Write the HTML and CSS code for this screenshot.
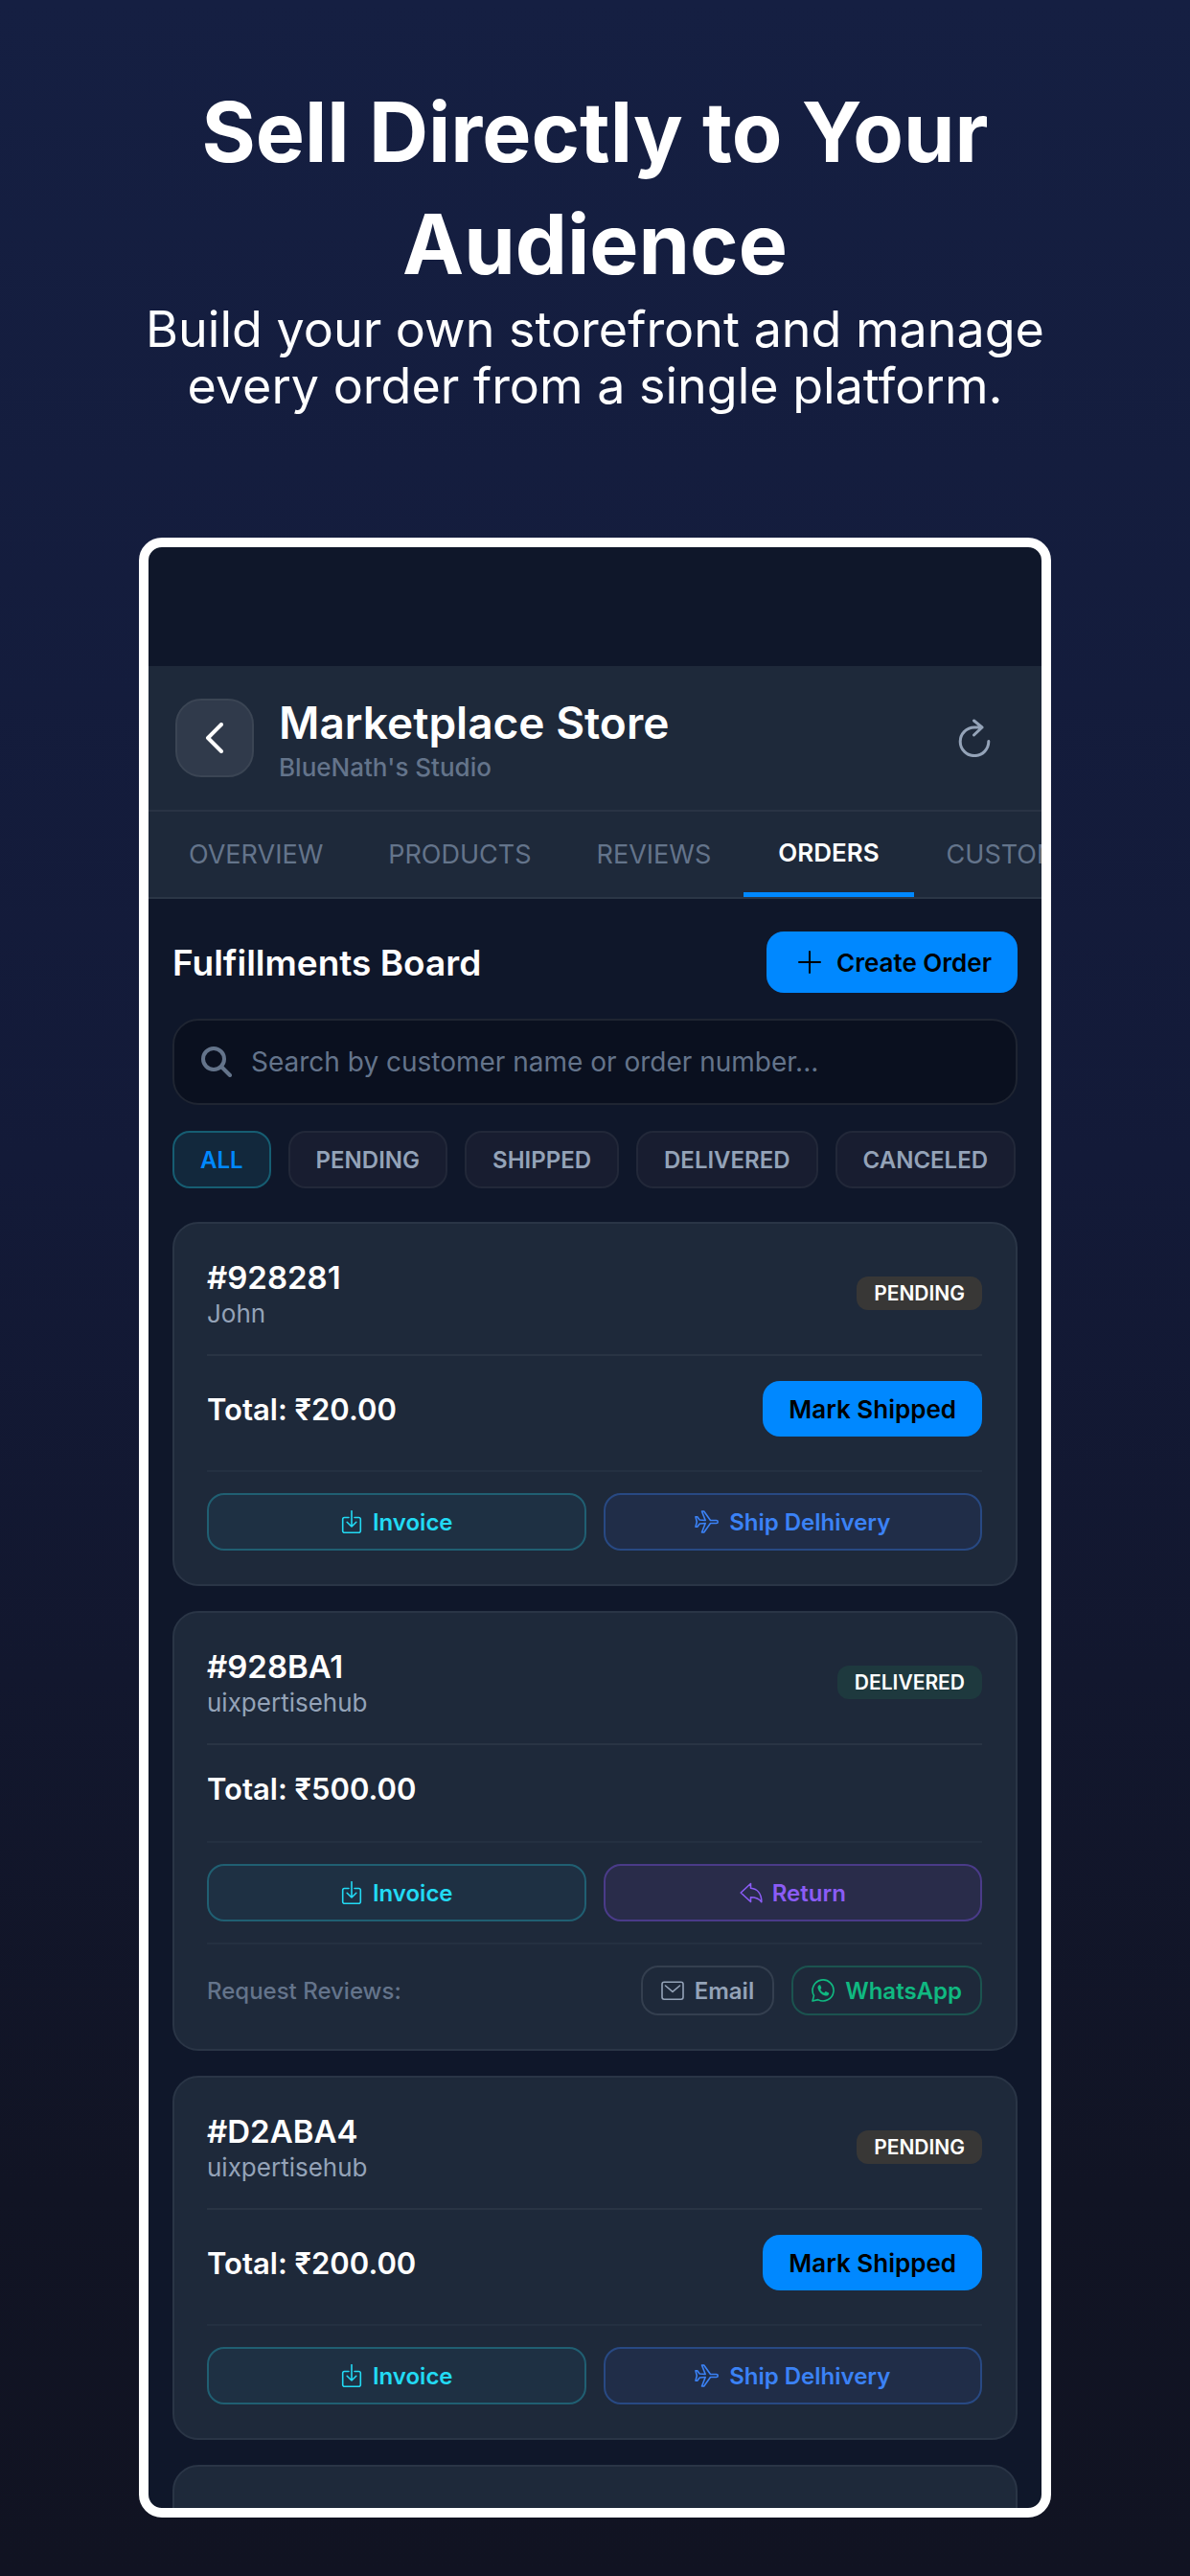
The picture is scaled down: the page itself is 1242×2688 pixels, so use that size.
FILE: index.html
```
<!DOCTYPE html>
<html lang="en">
<head>
  <meta charset="UTF-8" />
  <meta name="viewport" content="width=device-width, initial-scale=1.0"/>
  <title>Marketplace Store</title>
  <link rel="stylesheet" href="styles.css">
</head>
<body>
  <!-- Shared icons -->
  <svg class="sprite" aria-hidden="true">
    <symbol id="icon-invoice" viewBox="0 0 24 24">
      <path d="M9 7.500H4.500A1.800 1.800 0 0 0 2.700 9.300v12.200a1.800 1.800 0 0 0 1.800 1.800h15a1.800 1.800 0 0 0 1.800-1.800V9.300a1.800 1.800 0 0 0-1.800-1.800H15M12 .7v16.300M7.200 12.300L12 17l4.800-4.700"/>
    </symbol>
    <symbol id="icon-plane" viewBox="0 0 26 24">
      <path d="M1 6.800h1.800l2.400 3.200 6 .5L7.500 1h2.200L16.500 10.500h6.200a1.500 1.500 0 0 1 0 3H16.500L9.700 23H7.500l3.700-9.500-6 .5-2.400 3.200H1L2.300 12z"/>
    </symbol>
    <symbol id="icon-return" viewBox="0 0 24 24">
      <path d="M11.500 7.200V2.500L1.200 12l10.300 9.500v-4.700c5 0 8.500 1 11.300 4.900C22.800 13 18.500 7.800 11.500 7.200z"/>
    </symbol>
    <symbol id="icon-mail" viewBox="0 0 24 24">
      <rect x="1" y="3.200" width="22" height="18" rx="2.200"/>
      <path d="M4.500 7l7.500 6.300L19.500 7"/>
    </symbol>
    <symbol id="icon-whatsapp" viewBox="0 0 24 24">
      <path d="M1 23l1.500-5.600A11 11 0 1 1 6.800 21.600z"/>
      <path class="solid" d="M8.300 6.300c-1.500.6-2.200 2-1.700 3.700 1 3.500 3.900 6.500 7.700 7.500 1.700.4 3.300-.3 3.800-1.800.2-.9 0-1.200-.6-1.500l-2.200-1c-.5-.2-.8-.1-1.100.3l-.9 1.100c-1.900-.7-3.200-2-4-3.700l.8-1.100c.3-.4.3-.6.100-1.100L9.300 6.800c-.2-.5-.5-.6-1-.5z"/>
    </symbol>
  </svg>

  <header class="hero">
    <h1>Sell Directly to Your<br>Audience</h1>
    <p>Build your own storefront and manage<br>every order from a single platform.</p>
  </header>

  <main class="phone">
    <div class="status-bar"></div>

    <div class="store-header">
      <button class="back-btn" aria-label="Back">
        <svg width="20" height="32" viewBox="0 0 20 32"><path d="M17 2L3 16l14 14"/></svg>
      </button>
      <div class="store-name">
        <h2>Marketplace Store</h2>
        <p>BlueNath's Studio</p>
      </div>
      <button class="refresh-btn" aria-label="Refresh">
        <svg width="34" height="40" viewBox="0 0 34 40"><path d="M25 9H17A14.800 14.800 0 1 0 31.800 23.500M16.500 2l8.500 7-8.500 8"/></svg>
      </button>
    </div>

    <nav class="tabs">
      <a href="#overview">OVERVIEW</a>
      <a href="#products">PRODUCTS</a>
      <a href="#reviews">REVIEWS</a>
      <a href="#orders" class="active">ORDERS</a>
      <a href="#customers">CUSTOMERS</a>
    </nav>

    <section class="board">
      <div class="board-head">
        <h3>Fulfillments Board</h3>
        <button class="create-btn">
          <svg width="24" height="24" viewBox="0 0 24 24"><path d="M12 1v22M1 12h22"/></svg>
          Create Order
        </button>
      </div>

      <div class="search">
        <svg width="32" height="32" viewBox="0 0 32 32"><circle cx="13" cy="13" r="11"/><path d="M21 21l9 9"/></svg>
        <input type="text" aria-label="Search orders" placeholder="Search by customer name or order number...">
      </div>

      <div class="filters">
        <button class="active">ALL</button>
        <button>PENDING</button>
        <button>SHIPPED</button>
        <button>DELIVERED</button>
        <button>CANCELED</button>
      </div>

      <article class="card">
        <div class="card-head">
          <div>
            <h4>#928281</h4>
            <p>John</p>
          </div>
          <span class="badge pending">PENDING</span>
        </div>
        <div class="card-total">
          <span>Total: ₹20.00</span>
          <button class="ship-btn">Mark Shipped</button>
        </div>
        <div class="card-actions">
          <button class="invoice"><svg><use href="#icon-invoice"/></svg>Invoice</button>
          <button class="delhivery"><svg class="plane"><use href="#icon-plane"/></svg>Ship Delhivery</button>
        </div>
      </article>

      <article class="card">
        <div class="card-head">
          <div>
            <h4>#928BA1</h4>
            <p>uixpertisehub</p>
          </div>
          <span class="badge delivered">DELIVERED</span>
        </div>
        <div class="card-total">
          <span>Total: ₹500.00</span>
        </div>
        <div class="card-actions">
          <button class="invoice"><svg><use href="#icon-invoice"/></svg>Invoice</button>
          <button class="return"><svg><use href="#icon-return"/></svg>Return</button>
        </div>
        <div class="card-reviews">
          <span>Request Reviews:</span>
          <button class="email"><svg><use href="#icon-mail"/></svg>Email</button>
          <button class="whatsapp"><svg><use href="#icon-whatsapp"/></svg>WhatsApp</button>
        </div>
      </article>

      <article class="card">
        <div class="card-head">
          <div>
            <h4>#D2ABA4</h4>
            <p>uixpertisehub</p>
          </div>
          <span class="badge pending">PENDING</span>
        </div>
        <div class="card-total">
          <span>Total: ₹200.00</span>
          <button class="ship-btn">Mark Shipped</button>
        </div>
        <div class="card-actions">
          <button class="invoice"><svg><use href="#icon-invoice"/></svg>Invoice</button>
          <button class="delhivery"><svg class="plane"><use href="#icon-plane"/></svg>Ship Delhivery</button>
        </div>
      </article>

      <article class="card">
        <div class="card-head">
          <div>
            <h4>#C8C89A</h4>
          </div>
        </div>
      </article>
    </section>
  </main>
</body>
</html>
```

FILE: styles.css
```
* {
  box-sizing: border-box;
  margin: 0;
}

body {
  display: flex;
  flex-direction: column;
  height: 100vh;
  padding: 80px 145px 61px;
  font-family: Inter, "Liberation Sans", sans-serif;
  color: #ffffff;
  background: linear-gradient(180deg, #151f42 0%, #131a38 45%, #111424 85%, #111322 100%);
}

button {
  display: flex;
  align-items: center;
  justify-content: center;
  border: 2px solid transparent;
  border-radius: 18px;
  background: none;
  color: inherit;
  font-family: inherit;
  font-weight: 600;
  white-space: nowrap;
  cursor: pointer;
}

svg {
  flex: none;
  fill: none;
  stroke: currentColor;
  stroke-width: 2;
  stroke-linecap: round;
  stroke-linejoin: round;
}

.sprite {
  position: absolute;
  width: 0;
  height: 0;
}

.solid {
  fill: currentColor;
  stroke: none;
}

/* Hero */
.hero {
  margin: 0 -60px 129px;
  text-align: center;
}

.hero h1 {
  font-size: 86px;
  line-height: 117px;
  font-weight: 700;
}

.hero p {
  font-size: 52px;
  line-height: 59px;
}

/* Phone frame */
.phone {
  flex: 1;
  min-height: 0;
  overflow: hidden;
  border: 10px solid #ffffff;
  border-radius: 24px;
  background: #0f172a;
}

.status-bar {
  height: 124px;
}

.store-header {
  display: flex;
  align-items: center;
  gap: 26px;
  padding: 28px 53px 28px 28px;
  border-bottom: 2px solid #293344;
  background: #1e293a;
}

.back-btn {
  width: 82px;
  height: 82px;
  border-color: #3b4554;
  border-radius: 27px;
  background: #303a4b;
}

.back-btn svg {
  stroke-width: 4;
}

.store-name {
  flex: 1;
}

.store-name h2 {
  font-size: 46px;
  line-height: 62px;
  font-weight: 600;
}

.store-name p {
  color: #64748b;
  font-size: 26px;
  line-height: 32px;
  font-weight: 500;
}

.refresh-btn {
  padding: 0;
  border: none;
  color: #94a3b8;
}

.refresh-btn svg {
  stroke-width: 3;
}

.tabs {
  display: flex;
  height: 91px;
  padding-left: 8px;
  overflow: hidden;
  border-bottom: 2px solid #2b3646;
  background: #1e293a;
}

.tabs a {
  display: flex;
  align-items: center;
  padding: 0 34px;
  color: #64748b;
  font-size: 27px;
  font-weight: 400;
  text-decoration: none;
}

.tabs .active {
  padding: 0 36px;
  border-bottom: 5px solid #0088ff;
  color: #ffffff;
  font-size: 26px;
  font-weight: 600;
}

/* Orders board */
.board {
  padding: 34px 25px;
}

.board-head {
  display: flex;
  align-items: center;
  justify-content: space-between;
  margin-bottom: 27px;
}

.board-head h3 {
  font-size: 37px;
  font-weight: 600;
}

.create-btn {
  gap: 16px;
  height: 64px;
  padding: 0 27px 0 33px;
  background: #0088ff;
  border: none;
  color: #000000;
  font-size: 26px;
}

.search {
  display: flex;
  align-items: center;
  gap: 20px;
  height: 90px;
  margin-bottom: 27px;
  padding: 0 28px;
  border: 2px solid #1f2532;
  border-radius: 27px;
  background: #0a101f;
  color: #64748b;
}

.search svg {
  stroke-width: 4;
}

.search input {
  flex: 1;
  padding: 0;
  border: none;
  outline: none;
  background: none;
  color: #ffffff;
  font-family: inherit;
  font-size: 28px;
}

.search input::placeholder {
  color: #64748b;
}

.filters {
  display: flex;
  gap: 18px;
  margin-bottom: 35px;
}

.filters button {
  height: 60px;
  padding: 0 27px;
  border-color: #222839;
  background: #181d30;
  color: #94a3b8;
  font-size: 24px;
}

.filters .active {
  border-color: #165d72;
  background: #12283c;
  color: #0088ff;
}

/* Order card */
.card {
  margin-bottom: 26px;
  padding: 34px 35px 35px 34px;
  border: 2px solid #2a3546;
  border-radius: 27px;
  background: #1e293a;
}

.card-head {
  display: flex;
  align-items: center;
  justify-content: space-between;
  padding-bottom: 26px;
  border-bottom: 2px solid #293444;
}

.card-head h4 {
  font-size: 33px;
  line-height: 44px;
  font-weight: 600;
}

.card-head p {
  color: #94a3b8;
  font-size: 26px;
  line-height: 32px;
}

.badge {
  padding: 0 18px;
  border-radius: 12px;
  font-size: 21px;
  line-height: 35px;
  font-weight: 600;
}

.badge.pending {
  background: #383736;
}

.badge.delivered {
  background: #1e393e;
}

.card-total {
  display: flex;
  align-items: center;
  justify-content: space-between;
  padding: 26px 0 35px;
  font-size: 31px;
  line-height: 39px;
  font-weight: 600;
}

.ship-btn {
  height: 58px;
  padding: 0 27px;
  background: #0088ff;
  border: none;
  color: #000000;
  font-size: 26px;
}

.card-actions {
  display: grid;
  grid-template-columns: 1fr 1fr;
  gap: 18px;
  padding-top: 22px;
  border-top: 2px solid #243041;
}

.card-actions button {
  gap: 10px;
  height: 60px;
  font-size: 24px;
}

.card-actions svg,
.card-reviews svg {
  width: 24px;
  height: 24px;
  stroke-width: 1.6;
}

.card-actions .plane {
  width: 26px;
}

.invoice {
  border-color: #205f72;
  background: #1e3043;
  color: #22daf4;
}

.delhivery {
  border-color: #284983;
  background: #202d48;
  color: #3b82f6;
}

.return {
  border-color: #4a3b89;
  background: #292c4a;
  color: #8b5cf6;
}

.card-reviews {
  display: flex;
  align-items: center;
  gap: 18px;
  margin-top: 22px;
  padding-top: 22px;
  border-top: 2px solid #243041;
}

.card-reviews span {
  flex: 1;
  color: #64748b;
  font-size: 24px;
  font-weight: 500;
}

.card-reviews button {
  gap: 11px;
  height: 52px;
  padding: 0 19px;
  font-size: 24px;
}

.email {
  border-color: #343f4f;
  color: #94a3b8;
}

.whatsapp {
  border-color: #1b534f;
  color: #10b981;
}
```
